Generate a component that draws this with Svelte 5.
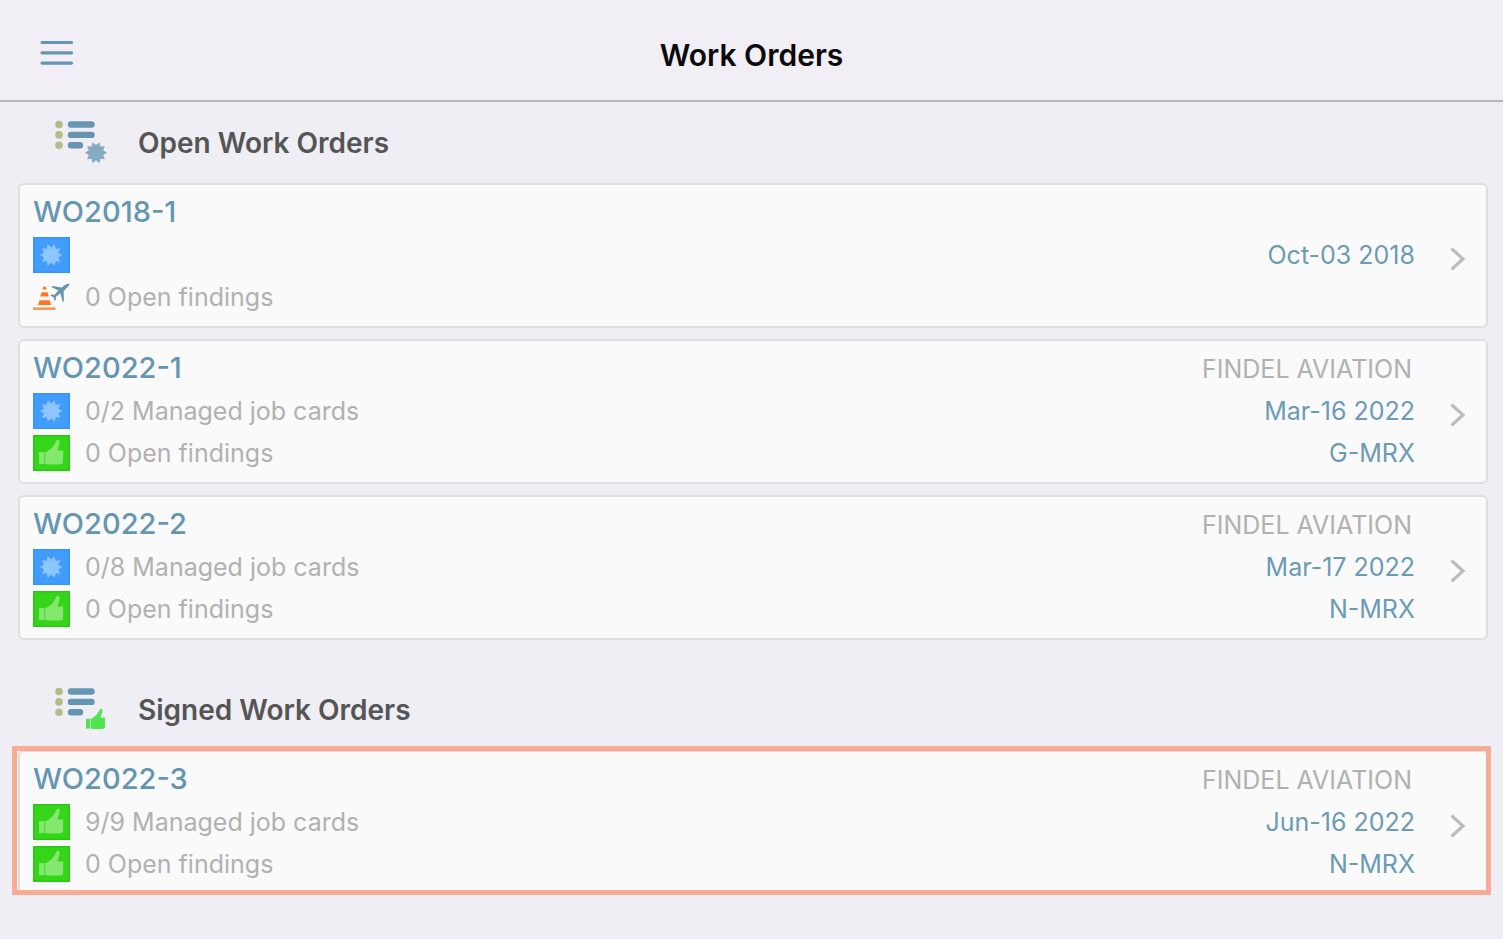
<script>
  const sections = [
    {
      title: 'Open Work Orders',
      badge: 'burst',
      orders: [
        {
          id: 'WO2018-1',
          client: '',
          date: 'Oct-03 2018',
          tail: '',
          lines: [
            { icon: 'burst', text: '' },
            { icon: 'cone', text: '0 Open findings' }
          ]
        },
        {
          id: 'WO2022-1',
          client: 'FINDEL AVIATION',
          date: 'Mar-16 2022',
          tail: 'G-MRX',
          lines: [
            { icon: 'burst', text: '0/2 Managed job cards' },
            { icon: 'thumb', text: '0 Open findings' }
          ]
        },
        {
          id: 'WO2022-2',
          client: 'FINDEL AVIATION',
          date: 'Mar-17 2022',
          tail: 'N-MRX',
          lines: [
            { icon: 'burst', text: '0/8 Managed job cards' },
            { icon: 'thumb', text: '0 Open findings' }
          ]
        }
      ]
    },
    {
      title: 'Signed Work Orders',
      badge: 'thumb',
      orders: [
        {
          id: 'WO2022-3',
          client: 'FINDEL AVIATION',
          date: 'Jun-16 2022',
          tail: 'N-MRX',
          highlighted: true,
          lines: [
            { icon: 'thumb', text: '9/9 Managed job cards' },
            { icon: 'thumb', text: '0 Open findings' }
          ]
        }
      ]
    }
  ];

  // Ten-pointed seal outline around a centre point.
  function burst(cx, cy, outer, inner) {
    const points = [];
    for (let i = 0; i < 20; i++) {
      const r = i % 2 ? inner : outer;
      const a = ((i * 18 - 72) * Math.PI) / 180;
      points.push(`${(cx + r * Math.cos(a)).toFixed(2)},${(cy + r * Math.sin(a)).toFixed(2)}`);
    }
    return points.join(' ');
  }
</script>

{#snippet thumb()}
  <path d="M0 12.500h5.400v12H0z" />
  <path d="M6.200 12.500c3.200-1 6.600-3.600 9-7.200C16.700 3 17.200.4 19 .2c1.900-.1 1.900 2.400 1.300 4.700-.6 2.200-1.500 4.200-1.700 6.100H23c1 0 1.400.7 1.300 1.700l-.4 10.300c-.1 1-.6 1.600-1.600 1.600-5.700.4-10.600.4-14.600 0-1 0-1.500-.3-1.500-1z" />
{/snippet}

<header>
  <button type="button" aria-label="Menu">
    <svg width="34" height="26" viewBox="0 0 34 26" aria-hidden="true">
      <path d="M2 2.500h29.500M2 12.800h29.500M2 23.100h29.500" stroke="#6496b2" stroke-width="3.200" stroke-linecap="round" />
    </svg>
  </button>
  <h1>Work Orders</h1>
</header>

<main>
  {#each sections as section}
    <section>
      <h2>
        <svg width="54" height="44" viewBox="0 0 54 44" aria-hidden="true">
          <g fill="#b4bd86">
            <circle cx="5" cy="5.500" r="3.800" />
            <circle cx="5" cy="15.900" r="3.800" />
            <circle cx="5" cy="26.300" r="3.800" />
          </g>
          <path d="M17 5.500h20.500M17 15.900h20.500M17 26.300h9" stroke="#6496b2" stroke-width="6.400" stroke-linecap="round" />
          {#if section.badge === 'burst'}
            <polygon points={burst(42, 33.7, 11, 7.6)} fill="#86aac1" />
          {:else}
            <g transform="translate(32 22.500) scale(0.79 0.82)" fill="#4fe352">{@render thumb()}</g>
          {/if}
        </svg>
        {section.title}
      </h2>
      <ul>
        {#each section.orders as order}
          <li class:highlighted={order.highlighted}>
            <a href="#{order.id}">
              <div class="details">
                <h3>{order.id}</h3>
                {#each order.lines as line}
                  <p>
                    <svg width="37" height="36" viewBox="0 0 37 36" aria-hidden="true">
                      {#if line.icon === 'burst'}
                        <rect width="37" height="36" fill="#3493fd" />
                        <rect x="1.500" y="1.500" width="34" height="33" fill="#429cfc" />
                        <polygon points={burst(18.2, 18, 11.3, 7.6)} fill="#8dc5ff" />
                      {:else if line.icon === 'thumb'}
                        <rect width="37" height="36" fill="#28c811" />
                        <rect x="1.500" y="1.500" width="34" height="33" fill="#35d51a" />
                        <g transform="translate(6 4.600)" fill="#84e770">{@render thumb()}</g>
                      {:else}
                        <g fill="#fd7921">
                          <path d="M10.600 7.500h1.900l1.400 3H9.200z" />
                          <path d="M8.500 13.300h6.200l1.200 4.200H7.300z" />
                          <path d="M6.500 21.300h10.200l1.500 4.700H5.100z" />
                        </g>
                        <path d="M0 28.300h22.600v2.700H0z" fill="#fb985b" />
                        <path d="M36.700 4.800c-2.200 0-4 .5-5.600 1.700l-2.400 2-8.900-1.600-1.400 1.200 6.900 3.300-3.700 4.400-3.300-.2-1 1 3.200 1.700 1.100 3.500 1.100-.9.300-3.200 4.400-3.400 2.300 8.700 1.300-1.200-.4-9.600 2.700-2.900c1.600-1.500 3.200-2.800 3.400-4.500z" fill="#6695ad" />
                      {/if}
                    </svg>
                    {line.text}
                  </p>
                {/each}
              </div>
              <div class="meta">
                <span class="client">{order.client}</span>
                <span>{order.date}</span>
                <span>{order.tail}</span>
              </div>
              <svg class="chevron" width="16" height="24" viewBox="0 0 16 24" aria-hidden="true">
                <path d="M2.500 2.500l10.500 9.500-10.500 9.500" fill="none" stroke="#bcbcbc" stroke-width="3.200" stroke-linecap="round" stroke-linejoin="miter" />
              </svg>
            </a>
          </li>
        {/each}
      </ul>
    </section>
  {/each}
</main>

<style>
  :global(body) {
    margin: 0;
    background: #efeef4;
    font-family: Inter, 'Liberation Sans', sans-serif;
  }

  h1,
  h2,
  h3,
  p,
  ul {
    margin: 0;
    padding: 0;
  }

  header {
    display: grid;
    grid-template-columns: 1fr auto 1fr;
    align-items: center;
    box-sizing: border-box;
    height: 102px;
    padding: 10px 40px 0;
    border-bottom: 2px solid #b5b4b9;
    background: #f1eef5;
  }

  button {
    justify-self: start;
    display: flex;
    padding: 0 0 4px;
    border: 0;
    background: none;
    cursor: pointer;
  }

  h1 {
    font-size: 30px;
    line-height: 40px;
    font-weight: 600;
    color: #0b0b0b;
  }

  main {
    padding: 0 15px 0 18px;
  }

  section {
    padding-bottom: 29px;
  }

  h2 {
    display: flex;
    align-items: center;
    gap: 30px;
    height: 81px;
    padding-left: 36px;
    font-size: 28px;
    font-weight: 600;
    color: #555;
  }

  h2 svg {
    padding-bottom: 4px;
  }

  ul {
    display: flex;
    flex-direction: column;
    gap: 11px;
    list-style: none;
  }

  li {
    position: relative;
  }

  .highlighted::after {
    content: '';
    position: absolute;
    inset: -4px -3px 0 -6px;
    border: 5px solid #f9ac95;
    pointer-events: none;
  }

  a {
    display: flex;
    align-items: center;
    padding: 6px 20px 8px 13px;
    border: 2px solid #dedede;
    border-radius: 6px;
    background: #fafafa;
    color: #6b9bb5;
    text-decoration: none;
  }

  .details {
    flex: 1;
  }

  h3 {
    padding-bottom: 1px;
    font-size: 29px;
    line-height: 42px;
    font-weight: 500;
    color: #6496b2;
  }

  p {
    display: flex;
    align-items: center;
    gap: 15px;
    height: 42px;
    font-size: 25px;
    color: #b1b1b1;
  }

  .meta {
    display: flex;
    flex-direction: column;
    align-items: flex-end;
    font-size: 25px;
    line-height: 42px;
  }

  .meta span {
    height: 42px;
  }

  .meta .client {
    padding-right: 3px;
    color: #b1b1b1;
  }

  .chevron {
    margin: 8px 0 0 35px;
  }
</style>
